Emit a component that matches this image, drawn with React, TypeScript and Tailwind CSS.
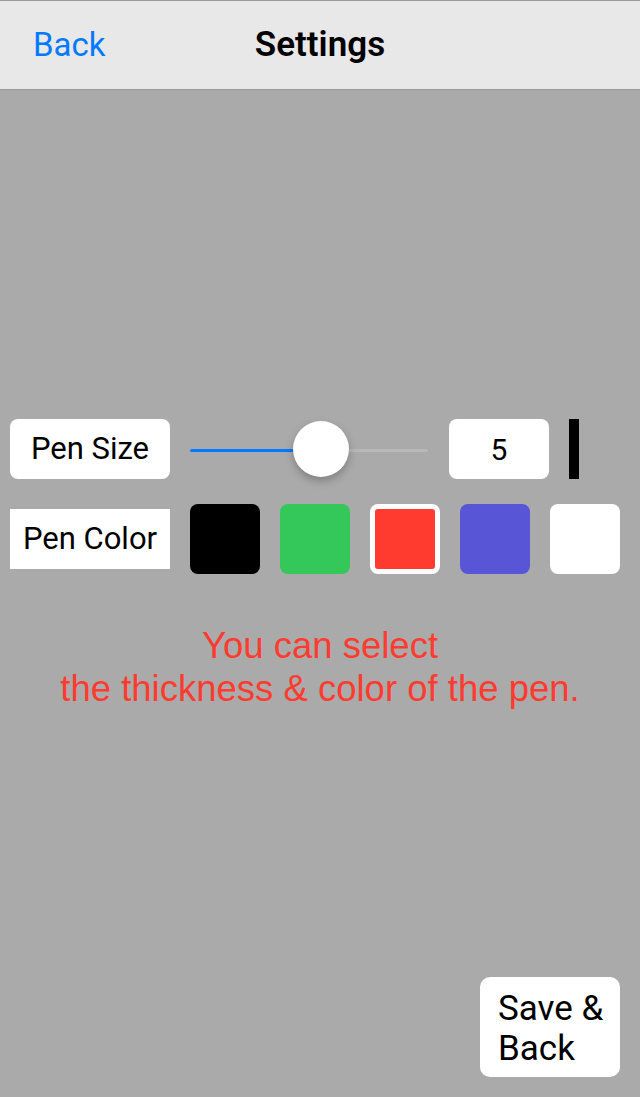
import React, { useState } from 'react';

const COLORS = ['#000000', '#34c759', '#ff3b30', '#5856d6', '#ffffff'];

export default function App() {
  const [size] = useState(5);
  const [selected, setSelected] = useState(2);

  return (
    <div className="flex h-[1097px] w-[640px] flex-col bg-[#aaaaaa] font-['Liberation_Sans',sans-serif]">
      {/* Nav bar */}
      <div className="relative flex h-[90px] shrink-0 items-center border-y border-[#9a9a9a] bg-[#e8e8e8] font-['Roboto',sans-serif]">
        <button className="ml-[33px] text-[33px] text-[#007aff]">Back</button>
        <div className="absolute left-1/2 -translate-x-1/2 text-[35px] font-semibold text-black">Settings</div>
      </div>

      <div className="flex flex-1 flex-col">
        {/* Pen size */}
        <div className="mt-[329px] flex h-[60px] items-center px-[10px]">
          <div className="flex h-[60px] w-[160px] items-center justify-center rounded-[8px] bg-white text-[31px] text-black font-['Roboto',sans-serif]">
            Pen Size
          </div>
          <div className="relative ml-[20px] h-[60px] w-[238px]">
            <div className="absolute left-0 right-0 top-[30px] h-[3px] rounded-full bg-[#b8b8b8]" />
            <div className="absolute left-0 top-[30px] h-[3px] w-[131px] rounded-full bg-[#007aff]" />
            <div className="absolute left-[103px] top-[2px] h-[56px] w-[56px] rounded-full bg-white shadow-[0_4px_8px_rgba(0,0,0,0.25)]" />
          </div>
          <div className="ml-[21px] flex h-[60px] w-[100px] items-center justify-center rounded-[8px] bg-white text-[30px] text-black font-['Roboto',sans-serif]">
            {size}
          </div>
          <div className="ml-[20px] h-[60px] w-[10px] bg-black" />
        </div>

        {/* Pen color */}
        <div className="mt-[25px] flex h-[70px] items-center px-[10px]">
          <div className="flex h-[60px] w-[160px] items-center justify-center bg-white text-[31px] text-black font-['Roboto',sans-serif]">
            Pen Color
          </div>
          <div className="ml-[20px] flex gap-[20px]">
            {COLORS.map((c, i) => (
              <button
                key={c}
                onClick={() => setSelected(i)}
                className={`h-[70px] w-[70px] rounded-[8px] ${i === selected ? 'border-[5px] border-white' : ''}`}
                style={{ backgroundColor: c }}
              />
            ))}
          </div>
        </div>

        {/* Hint */}
        <p className="mt-[50px] text-center text-[36.5px] leading-[43px] text-[#ff3b30]">
          You can select
          <br />
          the thickness &amp; color of the pen.
        </p>

        {/* Save */}
        <div className="mt-auto mb-[20px] flex justify-end pr-[20px]">
          <button className="h-[100px] w-[140px] rounded-[10px] bg-white pl-[18px] pt-[3px] text-left text-[35px] leading-[40px] text-black font-['Roboto',sans-serif]">
            Save &amp;
            <br />
            Back
          </button>
        </div>
      </div>
    </div>
  );
}
